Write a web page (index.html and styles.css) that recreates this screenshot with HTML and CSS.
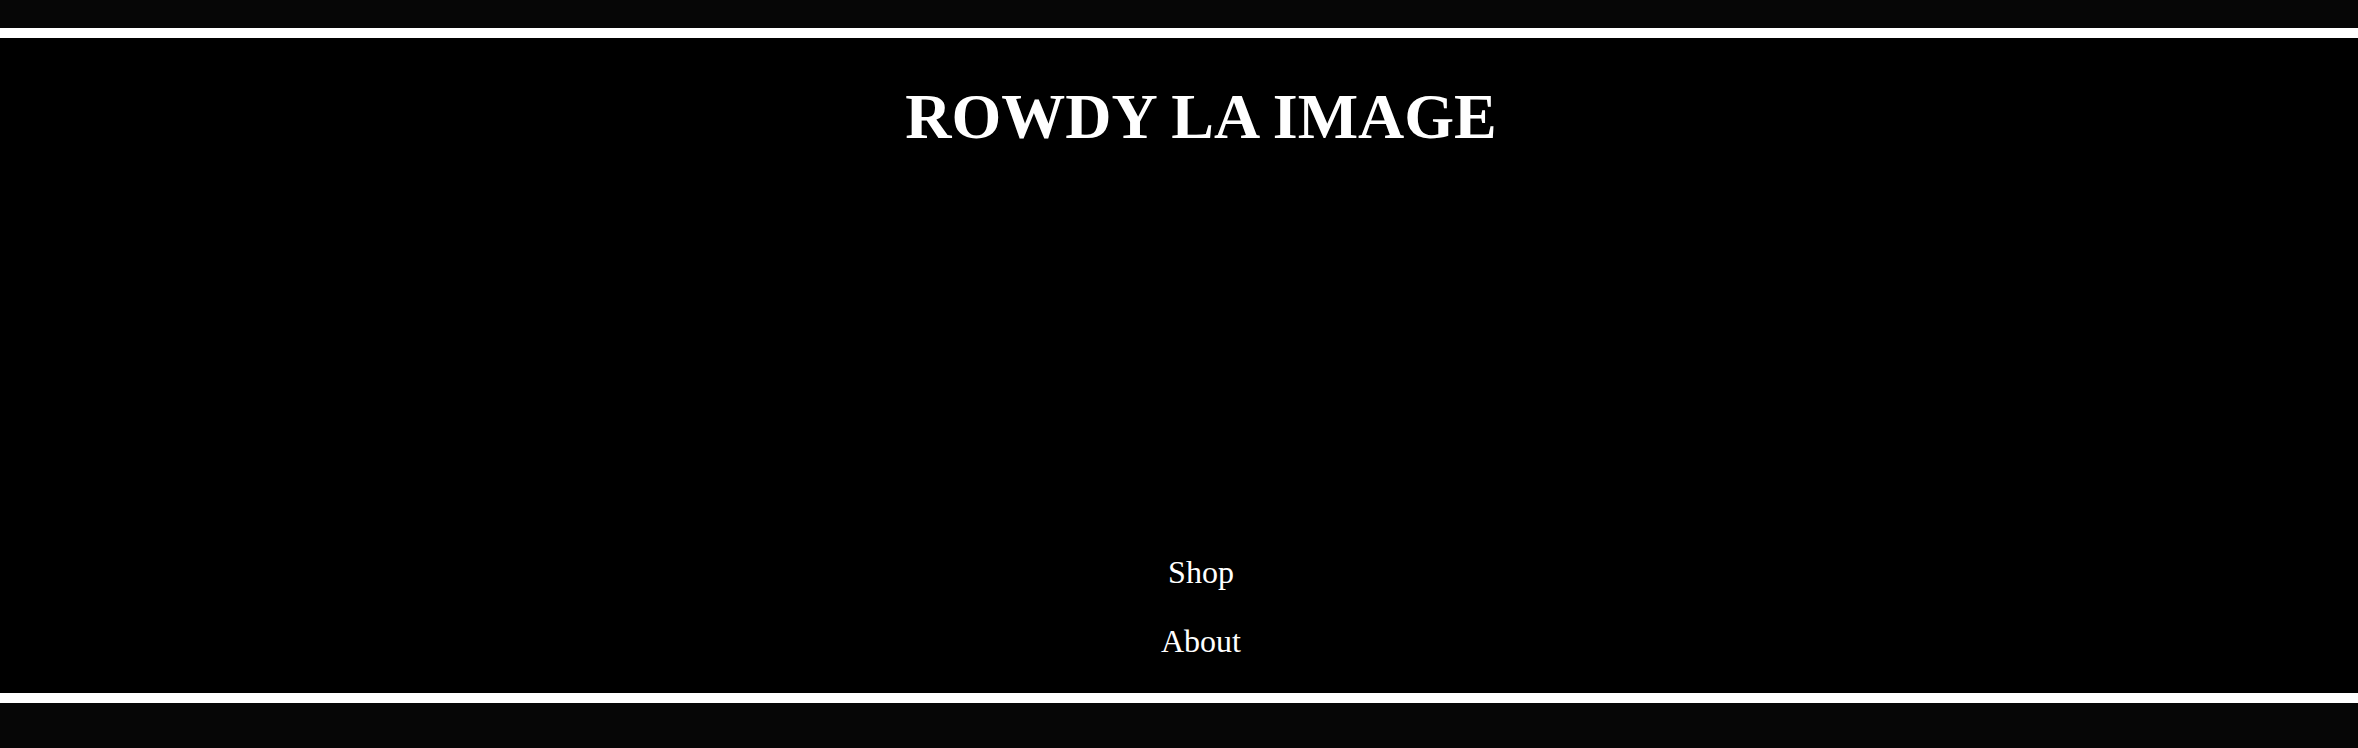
FILE: index.html
```html
<!DOCTYPE html>
<html lang="en">
<head>
<meta charset="utf-8">
<title>ROWDY LA IMAGE</title>
<link rel="stylesheet" href="styles.css">
</head>
<body>
<header class="site">
  <h1 class="brand">ROWDY LA IMAGE</h1>
  <div class="hero"></div>
  <nav class="menu">
    <a class="menu-link" href="#">Shop</a>
    <a class="menu-link" href="#">About</a>
  </nav>
</header>
</body>
</html>
```

FILE: styles.css
```css
html, body {
  background: #060606;
}
body {
  margin: 8px 0;
  font-family: "Liberation Serif", "Times New Roman", serif;
  color: #fff;
}
.site {
  margin-top: 20px;
  height: 655px;
  background: #000;
  border-top: 10px solid #fff;
  border-bottom: 10px solid #fff;
  display: flex;
  flex-direction: column;
  align-items: center;
  padding-left: 44px;
}
.brand {
  margin: 43px 0 0;
  font-size: 64px;
  font-weight: bold;
  line-height: 71px;
}
.hero {
  flex: 1;
}
.menu {
  display: flex;
  flex-direction: column;
  align-items: center;
  gap: 32px;
  margin-bottom: 33px;
}
.menu-link {
  color: #fff;
  text-decoration: none;
  font-size: 32px;
  line-height: 37px;
}
```
